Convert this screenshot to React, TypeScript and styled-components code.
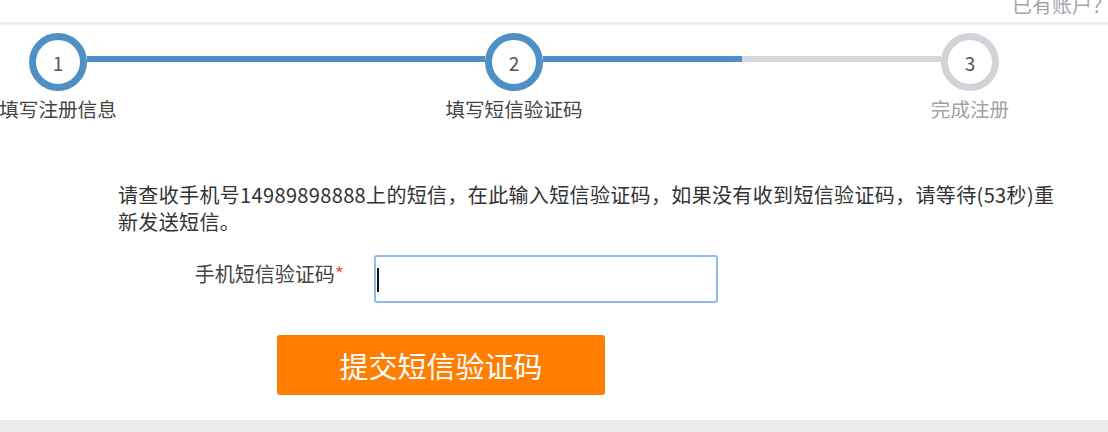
import { Fragment } from 'react';
import styled, { createGlobalStyle } from 'styled-components';

const GlobalStyle = createGlobalStyle`
  html, body {
    margin: 0;
    padding: 0;
    background: #fff;
    overflow: hidden;
  }
  body {
    font-family: "Noto Sans CJK SC", "Noto Sans", sans-serif;
    color: #333;
  }
`;

const Page = styled.div`
  width: 1108px;
  height: 432px;
  display: flex;
  flex-direction: column;
  overflow: hidden;
`;

const TopBar = styled.div`
  height: 22px;
  display: flex;
  justify-content: flex-end;
  align-items: flex-end;
  border-bottom: 3px solid #f0f0f0;
  overflow: hidden;
`;

const LoginHint = styled.span`
  font-size: 20px;
  line-height: 20px;
  color: #a3a7ad;
  white-space: nowrap;
  margin-bottom: 7px;
  margin-right: -4px;
`;

const Main = styled.main`
  flex: 1;
`;

const Track = styled.div`
  width: 970px;
  margin-left: 29px;
  padding-top: 8px;
  display: flex;
  align-items: flex-start;
`;

const Step = styled.div`
  width: 58px;
  display: flex;
  flex-direction: column;
  align-items: center;
`;

const Circle = styled.div<{ $done: boolean }>`
  width: 58px;
  height: 58px;
  box-sizing: border-box;
  border-radius: 50%;
  border: 7px solid ${({ $done }) => ($done ? '#4f8fc3' : '#d0d4d9')};
  background: #fff;
  display: flex;
  align-items: center;
  justify-content: center;
  font-size: 19px;
  color: #555;
`;

const StepLabel = styled.div<{ $done: boolean }>`
  margin-top: 6px;
  font-size: 19.6px;
  line-height: 24px;
  white-space: nowrap;
  color: ${({ $done }) => ($done ? '#444' : '#a0a3a8')};
`;

const Connector = styled.div<{ $fill: number }>`
  flex: 1;
  height: 6px;
  margin-top: 23px;
  background: linear-gradient(
    to right,
    #4f8fc3 0,
    #4f8fc3 ${({ $fill }) => $fill}%,
    #d4d7dc ${({ $fill }) => $fill}%,
    #d4d7dc 100%
  );
`;

const Body = styled.section`
  padding-left: 118px;
  margin-top: 60px;
`;

const Notice = styled.p`
  margin: 0;
  font-size: 20px;
  line-height: 27px;
  letter-spacing: 0.35px;
  color: #333;
  white-space: nowrap;
`;

const FormRow = styled.div`
  margin-top: 20px;
  display: flex;
  align-items: flex-start;
  gap: 30px;
`;

const FieldLabel = styled.label`
  width: 226px;
  text-align: right;
  font-size: 20px;
  line-height: 24px;
  padding-top: 7px;
  color: #444;
  white-space: nowrap;
`;

const Required = styled.span`
  color: #f05a5a;
`;

const InputWrap = styled.div`
  position: relative;
`;

const CodeInput = styled.input`
  width: 344px;
  height: 48px;
  box-sizing: border-box;
  border: 2px solid #93baf0;
  border-radius: 3px;
  outline: none;
  padding: 0 8px;
  font-size: 20px;
  caret-color: transparent;
`;

const Caret = styled.span`
  position: absolute;
  left: 3px;
  top: 13px;
  width: 2px;
  height: 24px;
  background: #111;
`;

const SubmitButton = styled.button`
  margin-top: 32px;
  margin-left: 159px;
  width: 328px;
  height: 60px;
  border: none;
  border-radius: 3px;
  background: #ff7d00;
  color: #fff;
  font-family: inherit;
  font-size: 29px;
  cursor: pointer;
`;

const Footer = styled.div`
  height: 12px;
  background: #ebebeb;
`;

const steps = [
  { n: 1, label: '填写注册信息', done: true },
  { n: 2, label: '填写短信验证码', done: true },
  { n: 3, label: '完成注册', done: false },
];

const fills = [100, 50];

export default function App() {
  return (
    <Page>
      <GlobalStyle />
      <TopBar>
        <LoginHint>已有账户？</LoginHint>
      </TopBar>
      <Main>
        <Track>
          {steps.map((s, i) => (
            <Fragment key={s.n}>
              <Step>
                <Circle $done={s.done}>{s.n}</Circle>
                <StepLabel $done={s.done}>{s.label}</StepLabel>
              </Step>
              {i < fills.length && <Connector $fill={fills[i]} />}
            </Fragment>
          ))}
        </Track>
        <Body>
          <Notice>
            请查收手机号14989898888上的短信，在此输入短信验证码，如果没有收到短信验证码，请等待(53秒)重
            <br />
            新发送短信。
          </Notice>
          <FormRow>
            <FieldLabel htmlFor="sms-code">
              手机短信验证码<Required>*</Required>
            </FieldLabel>
            <InputWrap>
              <CodeInput id="sms-code" type="text" />
              <Caret />
            </InputWrap>
          </FormRow>
          <SubmitButton type="button">提交短信验证码</SubmitButton>
        </Body>
      </Main>
      <Footer />
    </Page>
  );
}
